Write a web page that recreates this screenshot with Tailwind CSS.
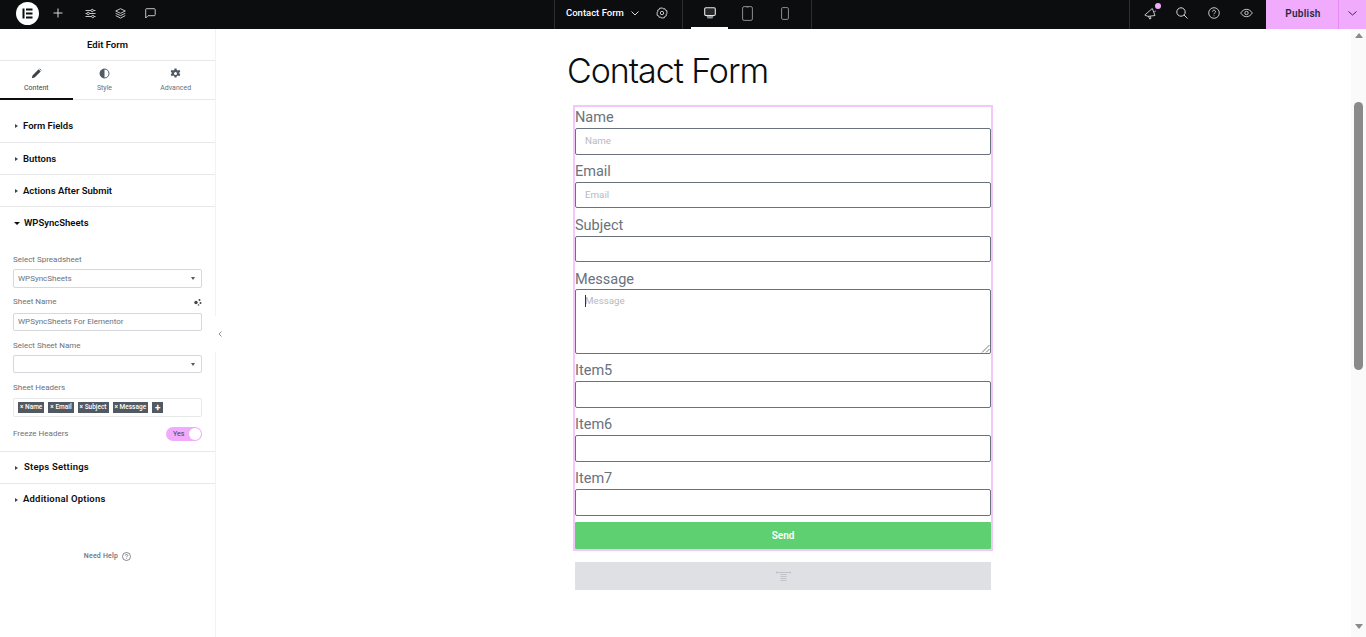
<!DOCTYPE html>
<html lang="en">
<head>
  <meta charset="UTF-8">
  <meta name="viewport" content="width=device-width, initial-scale=1.0">
  <title>Edit Form</title>
  <script src="https://cdn.jsdelivr.net/npm/@tailwindcss/browser@4"></script>
</head>
<body class="h-[637px] w-[1366px] overflow-hidden bg-white font-['Roboto',sans-serif]">
  <!-- top bar -->
  <header class="flex h-[29px] bg-[#0c0d0e] text-[#d5d8dc]">
    <div class="flex w-[554px] items-center pb-[3px] pl-[16px]">
      <div class="flex size-[23px] items-center justify-center rounded-full bg-white">
        <svg width="11" height="11" viewBox="0 0 11 11" fill="#0c0d0e"><rect x="0.5" y="0.5" width="2" height="10"/><rect x="4" y="0.5" width="6.5" height="2"/><rect x="4" y="4.5" width="6.5" height="2"/><rect x="4" y="8.5" width="6.5" height="2"/></svg>
      </div>
      <svg class="ml-[14px]" width="10" height="10" viewBox="0 0 10 10" stroke="currentColor" fill="none"><path d="M5 .5v9M.5 5h9"/></svg>
      <svg class="ml-[22px]" width="11" height="11" viewBox="0 0 11 11" stroke="currentColor" fill="none" stroke-width=".9"><path d="M.5 2.500h5.500M8.500 2.500h2M.5 5.500h1.500M4.500 5.500h6M.5 8.500h6M9 8.500h1.500"/><circle cx="7.200" cy="2.500" r="1.200"/><circle cx="3.200" cy="5.500" r="1.200"/><circle cx="7.800" cy="8.500" r="1.200"/></svg>
      <svg class="ml-[19px]" width="11" height="11" viewBox="0 0 11 11" stroke="currentColor" fill="none" stroke-width=".9"><path d="M5.500.7 10.300 3 5.500 5.300.7 3zM.7 5.300l4.800 2.300 4.800-2.300M.7 7.600l4.800 2.500 4.800-2.500"/></svg>
      <svg class="ml-[19px]" width="11" height="11" viewBox="0 0 11 11" stroke="currentColor" fill="none" stroke-width=".9"><path d="M1.500.7h7.700a1 1 0 0 1 1 1v5a1 1 0 0 1-1 1H3L.7 10V1.500a.8.8 0 0 1 .8-.8z"/></svg>
    </div>
    <div class="flex h-full w-[129px] items-center border-x border-[#2d2f32] pb-[3px] pl-[11px]">
      <span class="text-[9.500px] font-medium text-white">Contact Form</span>
      <svg class="ml-[7px]" width="8" height="5" viewBox="0 0 8 5" stroke="currentColor" fill="none"><path d="m.5.500 3.500 3.500L7.500.500"/></svg>
      <svg class="ml-[17px]" width="12" height="12" viewBox="0 0 12 12" stroke="currentColor" fill="none" stroke-width=".9"><path d="M6 .6 7.100 1.900l1.700-.3.600 1.600 1.600.6-.3 1.700L11.400 6l-1.300 1.100.3 1.700-1.600.6-.6 1.600-1.700-.3L6 11.400l-1.100-1.300-1.700.3-.6-1.600-1.600-.6.300-1.700L.6 6l1.300-1.100-.3-1.700 1.600-.6.600-1.600 1.700.3z"/><circle cx="6" cy="6" r="1.700"/></svg>
    </div>
    <div class="flex h-full w-[129px] border-r border-[#2d2f32] pl-[8px]">
      <div class="relative flex w-[37px] items-center justify-center pb-[3px]">
        <svg width="12" height="12" viewBox="0 0 12 12"><rect x=".7" y=".7" width="10.600" height="7.800" rx="1.200" fill="#26282b" stroke="#e6e8ea" stroke-width="1.100"/><path d="M2.500 9h7l-1 2.500h-5z" fill="#8b8e92"/></svg>
        <span class="absolute inset-x-0 bottom-0 h-[2px] bg-white"></span>
      </div>
      <div class="flex w-[38px] items-center justify-center pb-[3px]">
        <svg width="11" height="15" viewBox="0 0 11 15" fill="none" stroke="#8b8e92"><rect x=".6" y=".6" width="9.800" height="13.800" rx="1.500"/><path d="M4 1h3" stroke-width=".7"/></svg>
      </div>
      <div class="flex w-[37px] items-center justify-center pb-[3px]">
        <svg width="8" height="13" viewBox="0 0 8 13" fill="none" stroke="#8b8e92"><rect x=".6" y=".6" width="6.800" height="11.800" rx="1.200"/></svg>
      </div>
    </div>
    <div class="flex flex-1 items-center">
      <div class="ml-[317px] flex h-full items-center border-l border-[#2d2f32] pb-[3px]">
        <div class="relative ml-[14px]">
          <svg width="13" height="13" viewBox="0 0 13 13" fill="none" stroke="currentColor" stroke-width=".9"><path d="M.8 8 8.300 1.500l2.700 7-7 .9zM4.500 9.300l1.200 2.700 1.300-.6-.9-2.300M10.300 4.800l1.500-.8"/></svg>
          <span class="absolute -top-[4px] right-[-4px] size-[6px] rounded-full bg-[#f0abfc]"></span>
        </div>
        <svg class="ml-[19px]" width="12" height="12" viewBox="0 0 12 12" fill="none" stroke="currentColor"><circle cx="5" cy="5" r="4.200"/><path d="m8 8 3.500 3.500"/></svg>
        <svg class="ml-[20px]" width="12" height="12" viewBox="0 0 12 12" fill="none" stroke="currentColor" stroke-width=".9"><circle cx="6" cy="6" r="5.300"/><path d="M4.500 4.700c0-2 3-2 3 0 0 1.200-1.500 1.100-1.500 2.500M6 8.500v.7"/></svg>
        <svg class="ml-[20px]" width="13" height="10" viewBox="0 0 13 10" fill="none" stroke="currentColor" stroke-width=".9"><path d="M.7 5C3.700.1 9.300.1 12.300 5 9.300 9.900 3.700 9.900.7 5z"/><circle cx="6.500" cy="5" r="1.700"/></svg>
      </div>
      <div class="ml-[13px] flex h-full w-[72px] items-center justify-center bg-[#f0abfc] pb-[3px] pl-[2px] text-[10px] font-semibold tracking-wide text-[#1f2a44]">Publish</div>
      <div class="flex h-full flex-1 items-center justify-center border-l border-[#e58af2] bg-[#f0abfc] pb-[3px]">
        <svg width="9" height="5" viewBox="0 0 9 5" fill="none" stroke="#3a2f4a"><path d="m.5.500 4 3.500 4-3.500"/></svg>
      </div>
    </div>
  </header>

  <div class="flex h-[608px]">
    <!-- left panel -->
    <aside class="relative w-[216px] shrink-0 border-r border-[#f1f2f3]">
      <div class="flex h-[32px] items-center justify-center border-b border-[#e6e8ea] pt-px text-[9.500px] font-semibold text-[#0c0d0e]">Edit Form</div>
      <div class="flex h-[39px] border-b border-[#e6e8ea] text-[7px]">
        <div class="relative flex w-[73px] flex-col items-center pt-[7px] text-[#3f444b]">
          <svg width="11" height="11" viewBox="0 0 11 11" fill="#3f444b"><path d="M.8 10.200 1.500 7.400 7.600 1.300l2.100 2.100-6.100 6.100zM8.200.7l.5-.3 1.900 1.900-.4.500z"/></svg>
          <span class="mt-[4px]">Content</span>
          <span class="absolute inset-x-0 -bottom-px h-[2px] bg-[#0c0d0e]"></span>
        </div>
        <div class="flex w-[64px] flex-col items-center pt-[7px] text-[#69727d]">
          <svg width="11" height="11" viewBox="0 0 11 11"><circle cx="5.500" cy="5.500" r="4.500" fill="none" stroke="#515962"/><path d="M5.500 1a4.500 4.500 0 0 0 0 9z" fill="#515962"/></svg>
          <span class="mt-[4px]">Style</span>
        </div>
        <div class="flex w-[79px] flex-col items-center pt-[7px] text-[#69727d]">
          <svg width="11" height="11" viewBox="0 0 11 11" fill="#515962"><path fill-rule="evenodd" d="M4.500.5h2l.3 1.400 1.200.5L9.300 1.700l1 1.700-1 1 0 1.200 1 1-1 1.700-1.300-.7-1.200.5-.3 1.400h-2l-.3-1.400-1.200-.5-1.300.7-1-1.700 1-1V4.400l-1-1 1-1.700 1.300.7 1.200-.5zM5.500 4a1.500 1.500 0 1 0 0 3 1.500 1.500 0 0 0 0-3z"/></svg>
          <span class="mt-[4px]">Advanced</span>
        </div>
      </div>

      <div class="flex h-[43px] items-center border-b border-[#e6e8ea] pl-[15px] pt-[10px] text-[9.500px] font-semibold text-[#0c0d0e]"><span class="mr-[5px] size-0 border-y-[2.500px] border-l-[3px] border-y-transparent border-l-[#3f444b]"></span>Form Fields</div>
      <div class="flex h-[32px] items-center border-b border-[#e6e8ea] pl-[15px] pt-px text-[9.500px] font-semibold text-[#0c0d0e]"><span class="mr-[5px] size-0 border-y-[2.500px] border-l-[3px] border-y-transparent border-l-[#3f444b]"></span>Buttons</div>
      <div class="flex h-[32px] items-center border-b border-[#e6e8ea] pl-[15px] pt-px text-[9.500px] font-semibold text-[#0c0d0e]"><span class="mr-[5px] size-0 border-y-[2.500px] border-l-[3px] border-y-transparent border-l-[#3f444b]"></span>Actions After Submit</div>

      <div class="border-b border-[#e6e8ea] px-[13px]">
        <div class="flex h-[32px] items-center pl-px text-[9.500px] font-semibold text-[#0c0d0e]"><span class="mr-[4px] size-0 border-x-[3px] border-t-[3px] border-x-transparent border-t-[#0c0d0e]"></span>WPSyncSheets</div>
        <div class="mt-[15px] h-[12px] text-[8px] leading-[12px] text-[#69727d]">Select Spreadsheet</div>
        <div class="mt-[3px] flex h-[19px] items-center justify-between rounded-[2px] border border-[#d5d8dc] pl-[4px] pr-[6px] text-[8px] text-[#69727d]">WPSyncSheets<span class="size-0 border-x-[2.500px] border-t-[3px] border-x-transparent border-t-[#515962]"></span></div>
        <div class="mt-[8px] flex h-[12px] items-center justify-between text-[8px] text-[#69727d]">Sheet Name
          <svg width="8" height="8" viewBox="0 0 8 8" fill="#3f444b"><circle cx="2" cy="4.500" r="1.700"/><circle cx="5.500" cy="2" r="1"/><circle cx="6.500" cy="5" r="1"/><circle cx="4.500" cy="7" r=".8"/></svg>
        </div>
        <div class="mt-[5px] flex h-[18px] items-center rounded-[2px] border border-[#d5d8dc] pl-[4px] text-[8px] text-[#69727d]">WPSyncSheets For Elementor</div>
        <div class="mt-[8px] h-[12px] text-[8px] leading-[14px] text-[#69727d]">Select Sheet Name</div>
        <div class="mt-[4px] flex h-[18px] items-center justify-end rounded-[2px] border border-[#d5d8dc] pr-[6px]"><span class="size-0 border-x-[2.500px] border-t-[3px] border-x-transparent border-t-[#515962]"></span></div>
        <div class="mt-[8px] h-[12px] text-[8px] leading-[14px] text-[#69727d]">Sheet Headers</div>
        <div class="mt-[5px] flex h-[19px] items-center gap-[4px] rounded-[2px] border border-[#e6e8ea] pl-[4px] text-[6.500px] font-medium text-white">
          <span class="flex h-[11px] items-center bg-[#515962] px-[2px]">× Name</span>
          <span class="flex h-[11px] items-center bg-[#515962] px-[2px]">× Email</span>
          <span class="flex h-[11px] items-center bg-[#515962] px-[2px]">× Subject</span>
          <span class="flex h-[11px] items-center bg-[#515962] px-[2px]">× Message</span>
          <span class="flex size-[11px] items-center justify-center bg-[#515962] text-[10px] font-bold">+</span>
        </div>
        <div class="mt-[10px] flex h-[14px] items-center justify-between text-[8px] text-[#69727d]">Freeze Headers
          <span class="flex h-[14px] w-[36px] items-center justify-between rounded-full bg-[#f0abfc] pl-[7px] pr-[1px] text-[7px] text-[#3f444b]">Yes<span class="size-[12px] rounded-full bg-white"></span></span>
        </div>
        <div class="h-[10px]"></div>
      </div>

      <div class="flex h-[32px] items-center border-b border-[#e6e8ea] pl-[15px] text-[9.500px] font-semibold tracking-[.2px] text-[#0c0d0e]"><span class="mr-[6px] size-0 border-y-[2.500px] border-l-[3px] border-y-transparent border-l-[#3f444b]"></span>Steps Settings</div>
      <div class="flex h-[31px] items-center pl-[15px] text-[9.500px] font-semibold tracking-[.2px] text-[#0c0d0e]"><span class="mr-[5px] size-0 border-y-[2.500px] border-l-[3px] border-y-transparent border-l-[#3f444b]"></span>Additional Options</div>
      <div class="mt-[36px] flex items-center justify-center gap-[4px] text-[7px] font-medium tracking-[.2px] text-[#69727d]">Need Help
        <svg width="9" height="9" viewBox="0 0 9 9" fill="none" stroke="#515962" stroke-width=".7"><circle cx="4.500" cy="4.500" r="4"/><path d="M3.300 3.500c0-1.400 2.400-1.400 2.400 0 0 .9-1.200.8-1.200 1.800M4.500 6.300v.6"/></svg>
      </div>

      <!-- collapse handle -->
      <div class="absolute left-[215px] top-[287px] flex h-[36px] w-[10px] items-center justify-center bg-white">
        <svg width="4" height="6" viewBox="0 0 4 6" fill="none" stroke="#69727d" stroke-width=".8"><path d="M3.500.5 1 3l2.500 2.500"/></svg>
      </div>
    </aside>

    <!-- canvas -->
    <main class="min-w-0 flex-1 pl-[351px] pt-[21px]">
      <h1 class="h-[40px] pt-px font-['Inter',sans-serif] text-[34px] leading-[40px] font-light tracking-[-1.050px] text-[#0c0d0e]">Contact Form</h1>
      <div class="ml-[6px] mt-[15px] w-[420px] border-2 border-[#f5c6fb] font-['Roboto',sans-serif] text-[14.500px] text-[#69727d]">
        <label class="block h-[21px] leading-[21px]">Name</label>
        <div class="flex h-[27px] items-center rounded-[2px] border border-[#69727d] pb-px pl-[9px] text-[9.750px] text-[#b5b9be]">Name</div>
        <label class="mt-[6px] block h-[21px] leading-[21px]">Email</label>
        <div class="flex h-[26px] items-center rounded-[2px] border border-[#69727d] pl-[9px] text-[9.750px] text-[#b5b9be]">Email</div>
        <label class="mt-[7px] block h-[21px] leading-[21px]">Subject</label>
        <div class="h-[26px] rounded-[2px] border border-[#69727d]"></div>
        <label class="mt-[7px] block h-[21px] leading-[21px]">Message</label>
        <div class="relative mt-[-1px] h-[65px] rounded-[2px] border border-[#69727d] pl-[9px] pt-[4px] text-[9.750px] text-[#b5b9be]">Message
          <svg class="absolute bottom-0 right-0" width="9" height="9" viewBox="0 0 9 9" stroke="#555" stroke-width=".8" fill="none"><path d="M1 8.500 8.500 1M5 8.500 8.500 5"/></svg>
          <span class="absolute left-[9px] top-[5px] h-[12px] w-px bg-[#333]"></span>
        </div>
        <label class="mt-[6px] block h-[21px] leading-[22px]">Item5</label>
        <div class="h-[27px] rounded-[2px] border border-[#69727d]"></div>
        <label class="mt-[6px] block h-[21px] leading-[22px]">Item6</label>
        <div class="h-[27px] rounded-[2px] border border-[#69727d]"></div>
        <label class="mt-[6px] block h-[21px] leading-[21px]">Item7</label>
        <div class="h-[27px] rounded-[2px] border border-[#69727d]"></div>
        <div class="mt-[6px] flex h-[27px] items-center justify-center rounded-[1px] bg-[#5fd071] text-[10px] font-semibold text-white">Send</div>
      </div>
      <div class="ml-[8px] mt-[11px] flex h-[28px] w-[416px] items-center justify-center bg-[#dfe0e3]">
        <svg width="15" height="11" viewBox="0 0 15 11" fill="none" stroke="#c0c3c8" stroke-width="1.100"><path d="M.5 1.500h14M.5.500v2M14.500.500v2M4.500 3.500h6M4.500 5.500h6M4.500 7.500h6M4.500 9.500h6"/></svg>
      </div>
    </main>

    <!-- scrollbar -->
    <div class="flex w-[15px] shrink-0 flex-col items-center bg-[#fafafa] pt-[4px]">
      <span class="size-0 border-x-[4.500px] border-b-[5px] border-x-transparent border-b-[#8a8a8a]"></span>
      <span class="mt-[64px] h-[268px] w-[9px] rounded-full bg-[#8a8a8a]"></span>
      <span class="mt-[254px] size-0 border-x-[4.500px] border-t-[5px] border-x-transparent border-t-[#8a8a8a]"></span>
    </div>
  </div>
</body>
</html>
